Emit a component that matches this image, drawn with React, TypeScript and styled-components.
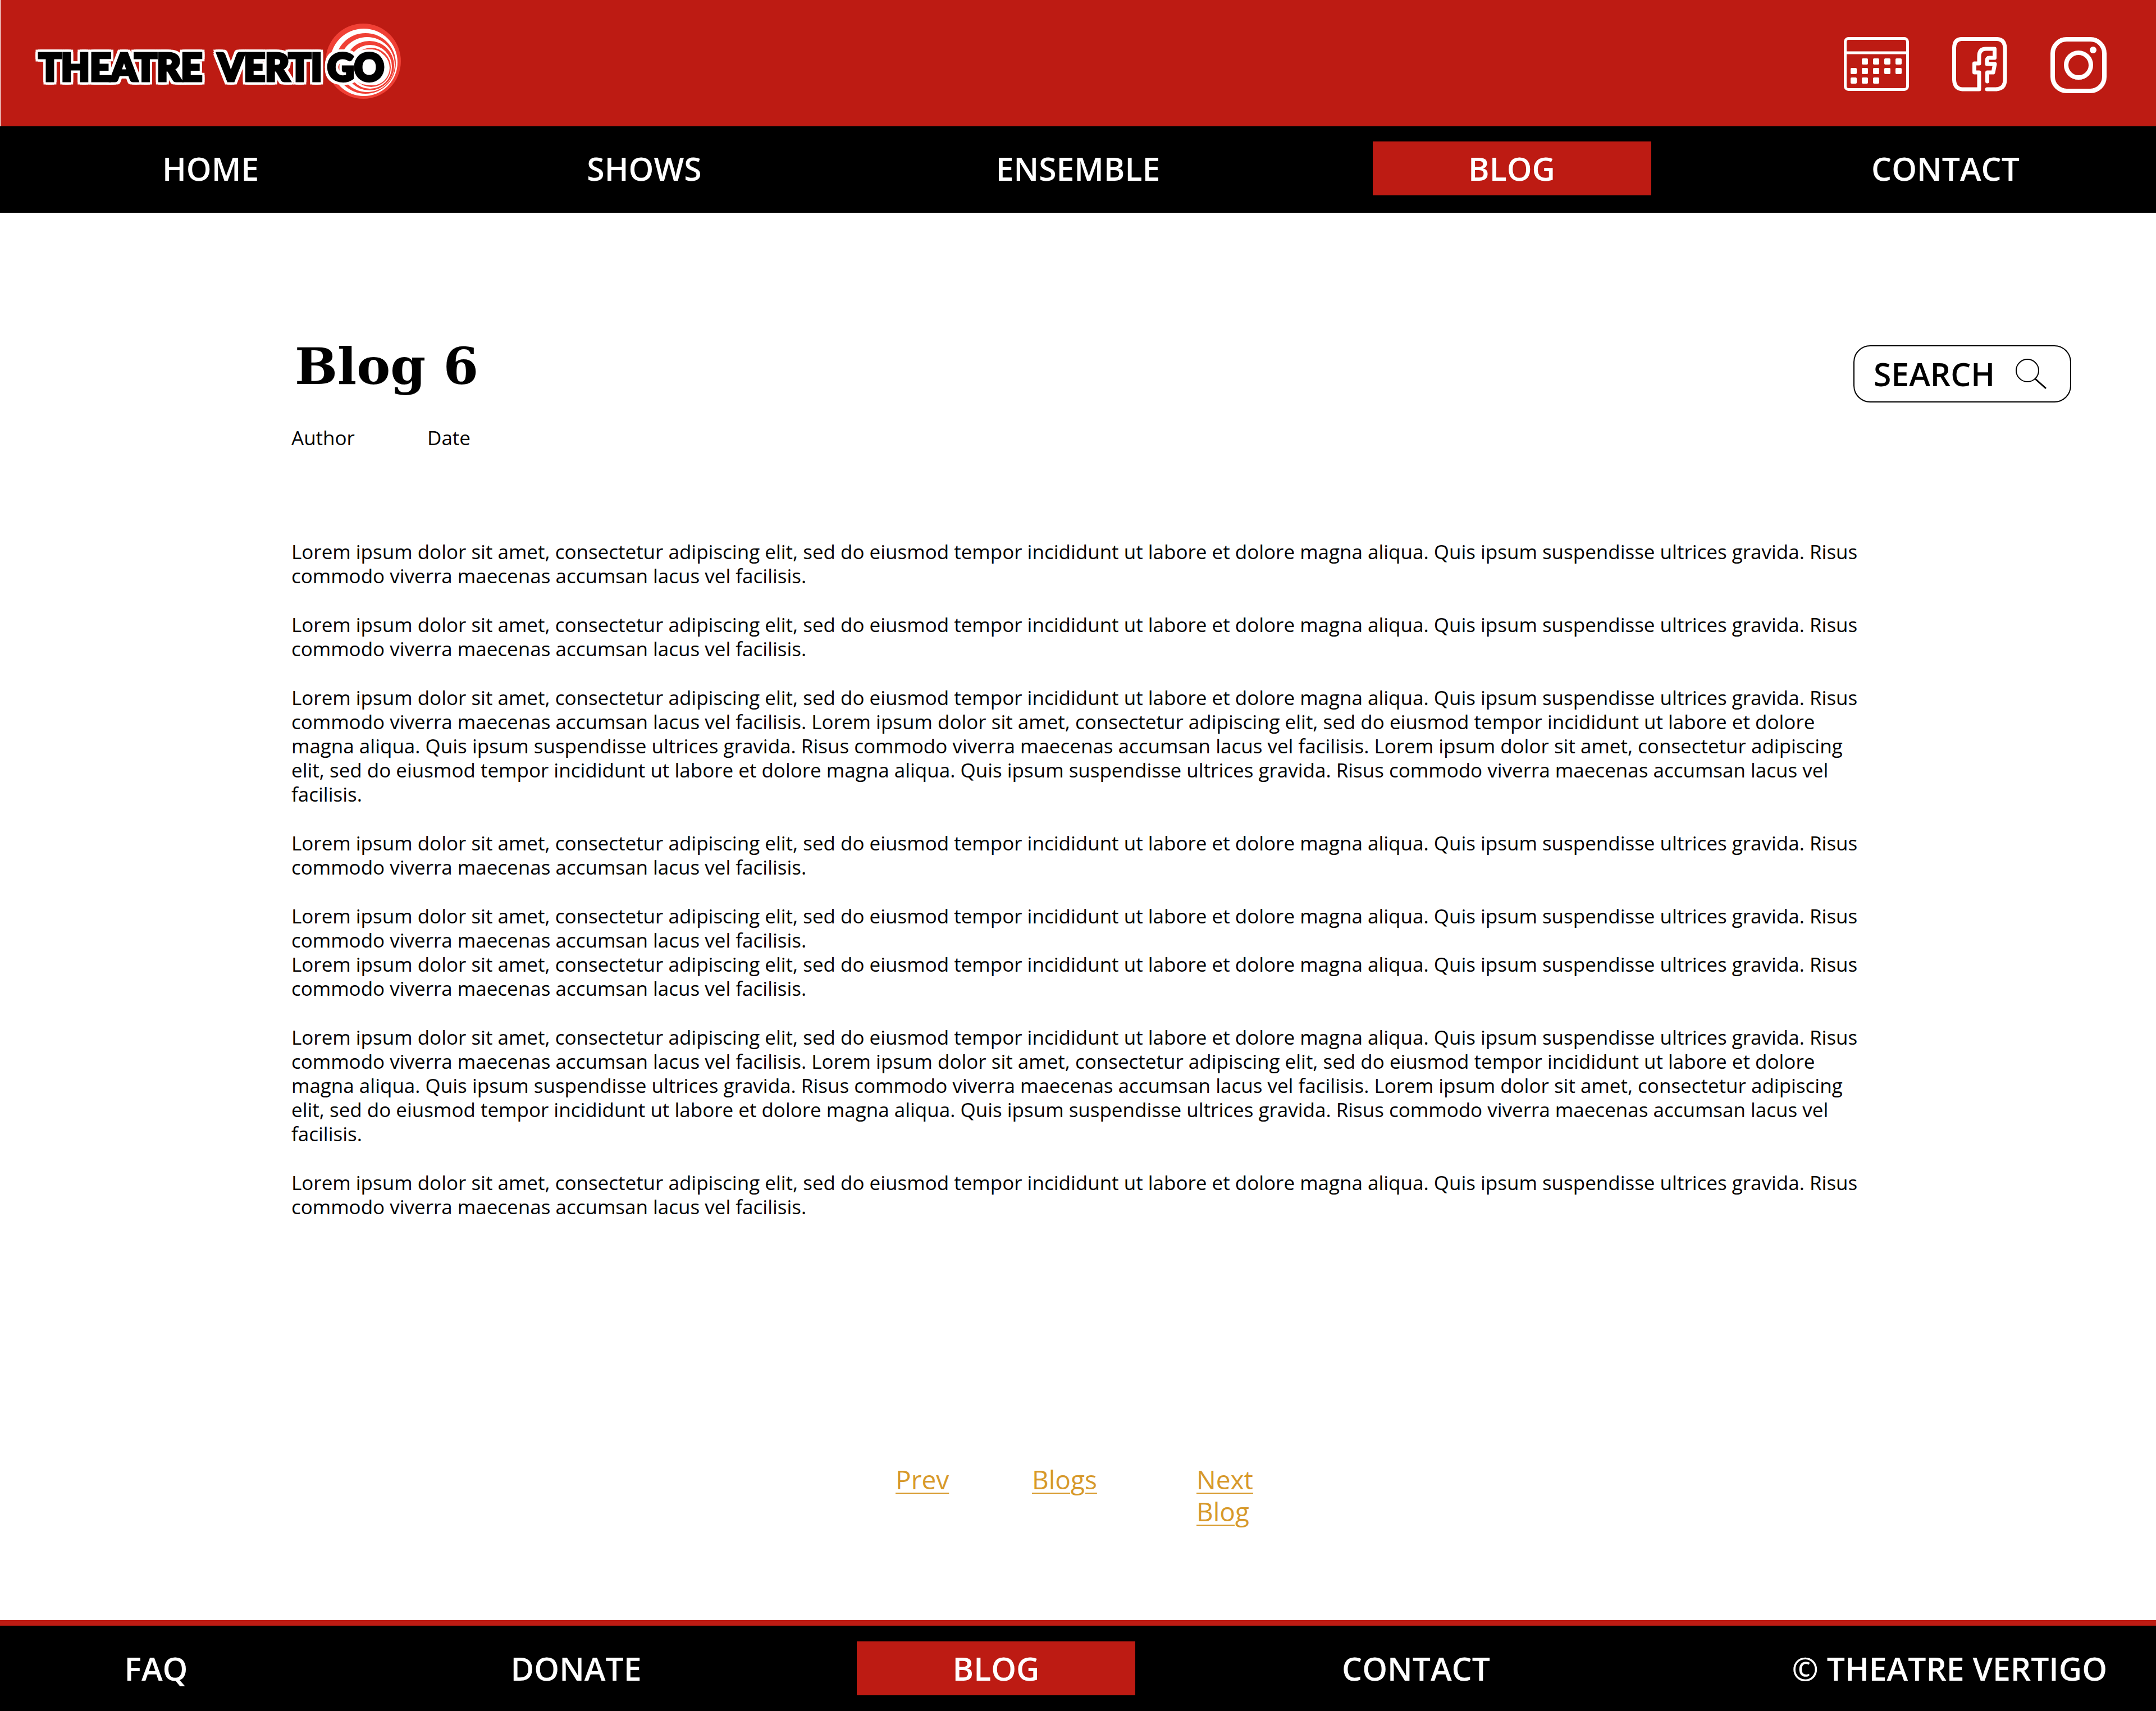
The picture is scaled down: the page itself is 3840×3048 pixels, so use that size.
import React from "react";
import styled, { createGlobalStyle } from "styled-components";

const RED = "#bd1b13";
const GOLD = "#d7992a";
const SANS = `"Trebuchet MS", "Open Sans", sans-serif`;

const GlobalStyle = createGlobalStyle`
  *, *::before, *::after { box-sizing: border-box; }
  body { margin: 0; background: #fff; color: #000; font-family: ${SANS}; }
`;

const Page = styled.div`
  display: flex;
  flex-direction: column;
  min-height: 100vh;
`;

const Masthead = styled.header`
  display: flex;
  align-items: flex-start;
  justify-content: space-between;
  height: 225px;
  padding: 40px 88px 0 60px;
  border-left: 1px solid #fff;
  background: ${RED};
`;

const PlainLink = styled.a`
  display: block;
  color: inherit;
  text-decoration: none;

  svg { display: block; }
`;

const Socials = styled.nav`
  display: flex;
  align-items: flex-start;
  gap: 77px;
  padding-top: 26px;
`;

const MainNav = styled.nav`
  display: flex;
  justify-content: space-between;
  padding: 27px 127px 31px;
  background: #000;
`;

const BarLink = styled.a<{ $active?: boolean; $fit?: boolean }>`
  display: flex;
  flex: 0 1 auto;
  align-items: center;
  justify-content: center;
  width: ${(p) => (p.$fit ? "auto" : "496px")};
  height: 96px;
  margin-left: ${(p) => (p.$fit ? "auto" : "0")};
  background: ${(p) => (p.$active ? RED : "transparent")};
  color: #fff;
  font-size: 57px;
  font-weight: 600;
  line-height: 72px;
  text-decoration: none;
  white-space: nowrap;
`;

const Main = styled.main`
  flex: 1;
  padding-top: 236px;
`;

const TitleRow = styled.div`
  display: flex;
  align-items: flex-start;
  justify-content: space-between;
  padding: 0 151px 0 519px;
`;

const Title = styled.h1`
  margin: 0;
  padding-left: 6px;
  font-family: Broadway, "DejaVu Serif", serif;
  font-size: 90px;
  font-weight: 700;
  line-height: 74px;
`;

const SearchButton = styled.button`
  display: flex;
  align-items: center;
  justify-content: space-between;
  width: 388px;
  height: 102px;
  padding: 0 40px 0 34px;
  border: 2px solid #000;
  border-radius: 30px;
  background: #fff;
  color: #000;
  font-family: inherit;
  font-size: 57px;
  font-weight: 600;
  line-height: 72px;
`;

const Meta = styled.div`
  display: grid;
  grid-template-columns: 242px auto;
  justify-content: start;
  padding: 41px 519px 0;
  font-size: 35px;
  line-height: 43px;
`;

const Article = styled.article`
  display: flex;
  flex-direction: column;
  gap: 44px;
  padding: 160px 519px 0;
  font-size: 35px;
  line-height: 43px;
`;

const Paragraph = styled.p`
  margin: 0;
`;

const Pager = styled.nav`
  display: grid;
  grid-template-columns: 243px 293px 114px;
  justify-content: center;
  margin-top: 436px;
  padding-bottom: 165px;
  font-size: 46px;
  line-height: 57px;
`;

const PagerLink = styled.a`
  justify-self: start;
  color: ${GOLD};
  text-decoration: underline;
  text-decoration-thickness: 2px;
  text-underline-offset: 6px;
`;

const Footer = styled.footer`
  display: flex;
  gap: 252px;
  padding: 28px 87px 28px 30px;
  border-top: 10px solid ${RED};
  background: #000;
`;

const RINGS: [number, number, number, string][] = [
  [586, 69, 67, "#f04035"],
  [587, 71, 60, "#fff"],
  [590, 73, 54, "#f04035"],
  [593, 75, 49, "#fff"],
  [597, 77, 44, "#f04035"],
  [598, 79, 39, "#fff"],
  [600, 80, 35, "#f04035"],
  [602, 81, 31, "#fff"],
];

const LogoWords = styled.g`
  fill: #000;
  stroke: #000;
  stroke-width: 5px;
  font-family: Lato, sans-serif;
  font-size: 66px;
  font-weight: 900;
  filter: drop-shadow(4px 0 0 #fff) drop-shadow(-4px 0 0 #fff) drop-shadow(0 4px 0 #fff)
    drop-shadow(0 -4px 0 #fff);
`;

function Logo() {
  return (
    <svg width="654" height="138" viewBox="0 0 654 138" role="img" aria-label="Theatre Vertigo">
      {RINGS.map(([cx, cy, r, fill]) => (
        <circle key={r} cx={cx} cy={cy} r={r} fill={fill} />
      ))}
      <LogoWords>
        <text x="8" y="104">THEATRE</text>
        <text x="327" y="104">
          VERTI<tspan x="522">GO</tspan>
        </text>
      </LogoWords>
    </svg>
  );
}

const DAYS: number[][] = [
  [1, 2, 3, 4],
  [0, 1, 2, 3, 4],
  [0, 1, 2],
];

function CalendarIcon() {
  return (
    <svg width="116" height="96" viewBox="0 0 116 96" fill="none" stroke="#fff" strokeWidth="5">
      <rect x="2.5" y="2.5" width="111" height="91" rx="6" />
      <path d="M3 28H113" />
      {DAYS.map((cols, row) =>
        cols.map((c) => (
          <rect
            key={`${row}-${c}`}
            x={12 + c * 20}
            y={38 + row * 17}
            width="11"
            height="11"
            rx="2"
            fill="#fff"
            stroke="none"
          />
        ))
      )}
    </svg>
  );
}

function FacebookIcon() {
  return (
    <svg
      width="98"
      height="97"
      viewBox="0 0 98 97"
      fill="none"
      stroke="#fff"
      strokeWidth="7"
      strokeLinecap="round"
      strokeLinejoin="round"
    >
      <path d="M62 93H78Q94 92 94 76V19Q93 4 80 3.500H16Q4 4 3.500 19V76Q4 92 18 93H48V63H39.500V47H48V34Q48 21 60 21H75.500V37H66Q62 37 62 42V48H76L73 63H62.500V79" />
    </svg>
  );
}

function InstagramIcon() {
  return (
    <svg width="100" height="100" viewBox="0 0 100 100" fill="none" stroke="#fff" strokeWidth="8">
      <rect x="4" y="4" width="92" height="92" rx="25" />
      <circle cx="50" cy="50" r="22" />
      <circle cx="76" cy="23" r="6" fill="#fff" stroke="none" />
    </svg>
  );
}

function SearchIcon() {
  return (
    <svg width="58" height="56" viewBox="0 0 58 56" fill="none" stroke="#000">
      <circle cx="22" cy="22" r="20" strokeWidth="2" />
      <path d="M36 37L55 54" strokeWidth="3" />
    </svg>
  );
}

const LOREM =
  "Lorem ipsum dolor sit amet, consectetur adipiscing elit, sed do eiusmod tempor incididunt ut labore et dolore magna aliqua. Quis ipsum suspendisse ultrices gravida. Risus commodo viverra maecenas accumsan lacus vel facilisis.";
const LONG = [LOREM, LOREM, LOREM].join(" ");

const BLOCKS: string[][] = [[LOREM], [LOREM], [LONG], [LOREM], [LOREM, LOREM], [LONG], [LOREM]];

export default function App() {
  return (
    <>
      <GlobalStyle />
      <Page>
        <Masthead>
          <PlainLink href="#home">
            <Logo />
          </PlainLink>
          <Socials aria-label="Social">
            <PlainLink href="#calendar" aria-label="Calendar">
              <CalendarIcon />
            </PlainLink>
            <PlainLink href="#facebook" aria-label="Facebook">
              <FacebookIcon />
            </PlainLink>
            <PlainLink href="#instagram" aria-label="Instagram">
              <InstagramIcon />
            </PlainLink>
          </Socials>
        </Masthead>
        <MainNav aria-label="Main">
          <BarLink href="#home">HOME</BarLink>
          <BarLink href="#shows">SHOWS</BarLink>
          <BarLink href="#ensemble">ENSEMBLE</BarLink>
          <BarLink href="#blog" $active aria-current="page">BLOG</BarLink>
          <BarLink href="#contact">CONTACT</BarLink>
        </MainNav>
        <Main>
          <TitleRow>
            <Title>Blog 6</Title>
            <SearchButton type="button">
              SEARCH
              <SearchIcon />
            </SearchButton>
          </TitleRow>
          <Meta>
            <span>Author</span>
            <span>Date</span>
          </Meta>
          <Article>
            {BLOCKS.map((block, i) => (
              <div key={i}>
                {block.map((text, j) => (
                  <Paragraph key={j}>{text}</Paragraph>
                ))}
              </div>
            ))}
          </Article>
          <Pager aria-label="Blog pages">
            <PagerLink href="#prev">Prev</PagerLink>
            <PagerLink href="#blogs">Blogs</PagerLink>
            <PagerLink href="#next">Next Blog</PagerLink>
          </Pager>
        </Main>
        <Footer>
          <BarLink href="#faq">FAQ</BarLink>
          <BarLink href="#donate">DONATE</BarLink>
          <BarLink href="#blog" $active>BLOG</BarLink>
          <BarLink href="#contact">CONTACT</BarLink>
          <BarLink href="#about" $fit>© THEATRE VERTIGO</BarLink>
        </Footer>
      </Page>
    </>
  );
}
